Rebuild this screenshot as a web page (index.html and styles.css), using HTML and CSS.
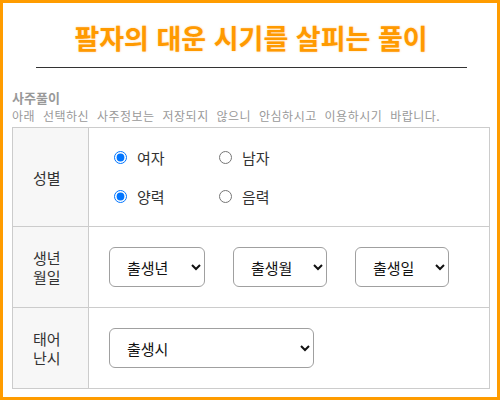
FILE: index.html
```html
<!DOCTYPE html>
<html lang="ko">
<head>
<meta charset="utf-8">
<title>팔자의 대운 시기를 살피는 풀이</title>
<link rel="stylesheet" href="styles.css">
</head>
<body>
<div class="page">
  <h1 class="title">팔자의 대운 시기를 살피는 풀이</h1>
  <hr class="rule">
  <h2 class="section-title">사주풀이</h2>
  <p class="notice">아래 선택하신 사주정보는 저장되지 않으니 안심하시고 이용하시기 바랍니다.</p>
  <div class="form">
    <div class="row row-radio">
      <div class="label">성별</div>
      <div class="field">
        <div class="radio-grid">
          <label class="opt"><input type="radio" name="sex" checked><span>여자</span></label>
          <label class="opt"><input type="radio" name="sex"><span>남자</span></label>
          <label class="opt"><input type="radio" name="cal" checked><span>양력</span></label>
          <label class="opt"><input type="radio" name="cal"><span>음력</span></label>
        </div>
      </div>
    </div>
    <div class="row">
      <div class="label">생년<br>월일</div>
      <div class="field field-select">
        <select class="sel sel-year"><option>출생년</option></select>
        <select class="sel sel-month"><option>출생월</option></select>
        <select class="sel sel-day"><option>출생일</option></select>
      </div>
    </div>
    <div class="row">
      <div class="label">태어<br>난시</div>
      <div class="field field-select">
        <select class="sel sel-time"><option>출생시</option></select>
      </div>
    </div>
  </div>
</div>
</body>
</html>
```
FILE: styles.css
```css
html, body {
  margin: 0;
  padding: 0;
  background: #fff;
}
body {
  font-family: "Noto Sans CJK KR", "Noto Sans", sans-serif;
  color: #333;
}
.page {
  box-sizing: border-box;
  width: 500px;
  height: 400px;
  border: 3px solid #ff9c00;
  padding: 0 7px 0 9px;
  overflow: hidden;
}
.title {
  margin: 20px 0 0;
  font-size: 27px;
  line-height: 30px;
  font-weight: 700;
  text-align: center;
  color: #ff9a00;
  text-shadow: 0 0 2px rgba(255, 180, 80, 0.6);
}
.rule {
  width: 431px;
  height: 0;
  margin: 14px auto 0;
  border: 0;
  border-top: 1px solid #333;
}
.section-title {
  margin: 21px 0 0;
  font-size: 13px;
  line-height: 17px;
  font-weight: 700;
  color: #999;
}
.notice {
  margin: 1px 0 0;
  font-size: 12px;
  line-height: 17px;
  color: #999;
  letter-spacing: 0.5px;
  word-spacing: 4px;
}
.form {
  margin-top: 3px;
  border: 1px solid #ccc;
  border-bottom: 0;
}
.row {
  display: flex;
  border-bottom: 1px solid #ccc;
}
.label {
  flex: 0 0 76px;
  box-sizing: border-box;
  display: flex;
  align-items: center;
  padding-left: 20px;
  border-right: 1px solid #ccc;
  background: #f7f7f7;
  font-size: 15px;
  line-height: 19px;
  color: #333;
}
.field {
  flex: 1;
  padding: 20px;
}
.row-radio .field {
  padding: 10px 20px;
}
.radio-grid {
  display: grid;
  grid-template-columns: 105px 105px;
  grid-auto-rows: 39px;
}
.opt {
  display: flex;
  align-items: center;
  font-size: 15px;
  color: #333;
}
.opt input {
  margin: 0 0 0 5px;
  width: 13px;
  height: 13px;
}
.opt span {
  margin-left: 10px;
}
.field-select {
  display: flex;
  gap: 28px;
}
.sel {
  box-sizing: border-box;
  height: 40px;
  padding: 0 0 0 13px;
  border: 1px solid #a0a0a0;
  border-radius: 6px;
  background: #fff;
  color: #111;
  font-family: "Noto Sans CJK KR", sans-serif;
  font-size: 15px;
}
.sel-year { width: 96px; }
.sel-month { width: 94px; }
.sel-day { width: 94px; }
.sel-time { width: 205px; }
```
